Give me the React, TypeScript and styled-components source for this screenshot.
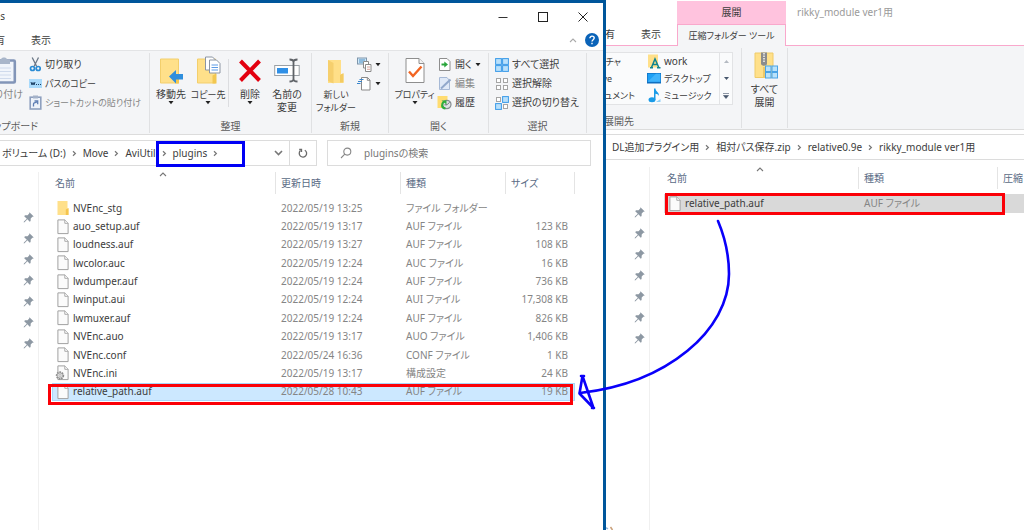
import React from "react";
import styled, { createGlobalStyle, css } from "styled-components";

const BLUE = "#00569b";
const INK = "#3c3c3c";
const MUTED = "#858585";
const HEAD = "#5a6b85";
const LINE = "#dcdcdc";
const RIBBON = "#f4f5f7";
const PINK = "#f9a8cc";

const Global = createGlobalStyle`
  * { box-sizing: border-box; }
  body {
    margin: 0;
    background: #fff;
    color: ${INK};
    font: 10px/13px "Noto Sans", "Noto Sans CJK JP", sans-serif;
    font-feature-settings: "palt";
  }
  button, input { font: inherit; color: inherit; }
  svg { display: block; flex: none; }
`;

/* ---------- window frames ---------- */

const Desktop = styled.main`
  display: flex;
  min-height: 100vh;
  overflow: hidden;
`;

const Window = styled.section<{ $share: number; $active?: boolean }>`
  flex: ${(p) => p.$share} 1 ${(p) => p.$share}px;
  min-width: 0;
  display: flex;
  flex-direction: column;
  position: relative;
  background: #fff;
  ${(p) =>
    p.$active &&
    css`
      border-top: 3px solid ${BLUE};
      border-right: 3px solid ${BLUE};
      overflow: hidden;
    `}
`;

const TitleBar = styled.header<{ $height: number }>`
  display: flex;
  align-items: center;
  height: ${(p) => p.$height}px;
`;

const TitleClip = styled.div`
  width: 5px;
  display: flex;
  justify-content: flex-end;
  overflow: hidden;
`;

const InactiveTitle = styled.span`
  padding-left: 11px;
  color: #9a9a9a;
`;

const Spacer = styled.div`
  flex: 1;
`;

const FlatButton = styled.button`
  display: flex;
  align-items: center;
  justify-content: center;
  padding: 0;
  border: 0;
  background: none;
`;

const CaptionButton = styled(FlatButton)`
  width: 40px;
  height: 27px;
`;

const TabRow = styled.nav<{ $height: number }>`
  display: flex;
  align-items: center;
  height: ${(p) => p.$height}px;
  padding-right: 2px;
`;

const Tab = styled(FlatButton)<{ $width: number; $clip?: boolean; $pad?: number }>`
  flex: none;
  width: ${(p) => p.$width}px;
  padding-left: ${(p) => p.$pad ?? 0}px;
  white-space: nowrap;
  overflow: hidden;
  ${(p) => p.$clip && "justify-content: flex-end;"}
`;

const IconButton = styled(FlatButton)`
  width: 19px;
  height: 19px;
`;

const ContextHeader = styled.div`
  width: 109px;
  height: 23px;
  margin: 1px 0 0 71px;
  display: flex;
  align-items: center;
  justify-content: center;
  background: #ffc3de;
`;

const ContextTab = styled(FlatButton)`
  position: relative;
  flex: none;
  width: 109px;
  height: 22px;
  align-self: flex-start;
  white-space: nowrap;
  font-size: 9px;
  border: 1px solid ${PINK};
  border-bottom: 0;
  background: ${RIBBON};
`;

/* ---------- ribbon ---------- */

const Ribbon = styled.div<{ $edge: string }>`
  display: flex;
  height: 85px;
  background: ${RIBBON};
  border-top: 1px solid ${(p) => p.$edge};
  border-bottom: 1px solid ${LINE};
  overflow: hidden;
`;

const Group = styled.div<{ $width: number }>`
  display: flex;
  flex-direction: column;
  flex: none;
  width: ${(p) => p.$width}px;
  margin: 2px 0 1px;
  border-right: 1px solid #e0e1e3;
`;

const GroupBody = styled.div<{ $end?: boolean; $pad?: number }>`
  flex: 1;
  display: flex;
  align-items: flex-start;
  min-width: 0;
  min-height: 0;
  padding-left: ${(p) => p.$pad ?? 0}px;
  justify-content: ${(p) => (p.$end ? "flex-end" : "flex-start")};
`;

const GroupLabel = styled.div<{ $right?: number }>`
  height: 13px;
  display: flex;
  justify-content: ${(p) => (p.$right === undefined ? "center" : "flex-end")};
  padding-right: ${(p) => p.$right ?? 0}px;
  white-space: nowrap;
  color: #5c5c5c;
`;

const Big = styled.button<{ $width: number; $muted?: boolean; $dense?: boolean }>`
  position: relative;
  flex: none;
  width: ${(p) => p.$width}px;
  display: flex;
  flex-direction: column;
  align-items: center;
  gap: 4px;
  padding: 3px 0 0;
  border: 0;
  background: none;
  font-size: ${(p) => (p.$dense ? 9 : 10)}px;
  color: ${(p) => (p.$muted ? "#858585" : INK)};
  white-space: nowrap;
`;

const BigText = styled.span`
  display: flex;
  flex-direction: column;
  align-items: center;
`;

const Divider = styled.div`
  width: 1px;
  height: 48px;
  margin: 6px 2px 0;
  background: #dcdde0;
`;

const Stack = styled.div<{ $width: number }>`
  display: flex;
  flex-direction: column;
  flex: none;
  width: ${(p) => p.$width}px;
  padding-top: 2px;
`;

const Small = styled.button<{ $muted?: boolean; $dense?: boolean }>`
  display: flex;
  align-items: center;
  gap: 3px;
  height: 19px;
  padding: 0;
  border: 0;
  background: none;
  white-space: nowrap;
  font-size: ${(p) => (p.$dense ? 9 : 10)}px;
  color: ${(p) => (p.$muted ? "#858585" : INK)};
`;

const Gallery = styled.div`
  display: flex;
  width: 127px;
  height: 53px;
  margin-top: 4px;
  background: #fafbfc;
  border: 1px solid #e2e3e5;
  border-left: 0;
  overflow: hidden;
`;

const GalleryColumn = styled.div<{ $width: number; $hidden?: number }>`
  width: ${(p) => p.$width}px;
  flex: none;
  margin-left: -${(p) => p.$hidden ?? 0}px;
  display: flex;
  flex-direction: column;
  align-items: flex-start;
`;

const GalleryItem = styled(Small)`
  height: 17px;
`;

const GalleryScroll = styled.div`
  width: 13px;
  margin-left: auto;
  display: flex;
  flex-direction: column;
  border-left: 1px solid #e2e3e5;
`;

const ScrollButton = styled(FlatButton)`
  height: 17px;
`;

/* ---------- address bar ---------- */

const AddressRow = styled.div`
  display: flex;
  gap: 10px;
  margin: 5px 12px 6px 0;
  height: 26px;
`;

const AddressBox = styled.div`
  flex: 317 1 317px;
  min-width: 0;
  display: flex;
  align-items: stretch;
  border: 1px solid ${LINE};
  border-left: 0;
`;

const WideAddress = styled.nav`
  display: flex;
  align-items: center;
  height: 26px;
  margin: 4px 0 7px;
  border: 1px solid ${LINE};
  border-width: 1px 0;
  padding-left: 6px;
  white-space: nowrap;
`;

const Crumbs = styled.nav`
  display: flex;
  align-items: center;
  flex: 1;
  padding-left: 2px;
  white-space: nowrap;
`;

const Crumb = styled.a`
  color: ${INK};
  text-decoration: none;
`;

const Gap = styled.span`
  width: 17px;
  display: flex;
  justify-content: center;
`;

const BlueMark = styled.span`
  position: relative;
  display: flex;
  align-items: center;
  padding-right: 20px;

  &::after {
    content: "";
    position: absolute;
    inset: -6px -1px -7px 0;
    border: 3px solid #0000f5;
    pointer-events: none;
  }
`;

const HistoryDrop = styled(FlatButton)`
  width: 22px;
`;

const Refresh = styled(FlatButton)`
  width: 27px;
  border-left: 1px solid ${LINE};
`;

const SearchBox = styled.label`
  flex: 264 1 264px;
  min-width: 0;
  display: flex;
  align-items: center;
  gap: 12px;
  padding-left: 12px;
  border: 1px solid ${LINE};
`;

const SearchInput = styled.input`
  flex: 1;
  min-width: 0;
  padding: 0;
  border: 0;
  outline: 0;
  background: none;
  &::placeholder {
    color: #777;
    opacity: 1;
  }
`;

/* ---------- file pane ---------- */

const Content = styled.div`
  flex: 1;
  display: flex;
  align-items: stretch;
`;

const Pins = styled.aside<{ $width: number }>`
  width: ${(p) => p.$width}px;
  flex: none;
  display: flex;
  flex-direction: column;
  align-items: flex-end;
  gap: 9px;
  padding: 39px 3px 0 0;
  border-right: 1px solid #f0f0f0;
`;

const Pane = styled.div<{ $right: number; $left: number }>`
  flex: 1;
  min-width: 0;
  padding: 0 ${(p) => p.$right}px 0 ${(p) => p.$left}px;
`;

const Files = styled.table<{ $height: number }>`
  width: 100%;
  height: ${(p) => p.$height}px;
  table-layout: fixed;
  border-collapse: collapse;
  white-space: nowrap;
`;

const Th = styled.th<{ $width?: number }>`
  position: relative;
  width: ${(p) => (p.$width ? `${p.$width}px` : "auto")};
  height: 27px;
  padding: 0;
  vertical-align: top;
  text-align: left;
  font-weight: 400;
  color: ${HEAD};
`;

const HeadCell = styled.div<{ $first?: boolean; $last?: boolean }>`
  display: flex;
  align-items: center;
  height: 22px;
  padding-left: ${(p) => (p.$first ? 3 : 5)}px;
  border-left: ${(p) => (p.$first ? 0 : 1)}px solid #e4e4e4;
  border-right: ${(p) => (p.$last ? 1 : 0)}px solid #e4e4e4;
  overflow: hidden;
`;

const SortMark = styled.span`
  position: absolute;
  top: 0;
  left: 50%;
  margin-left: -5px;
`;

const Row = styled.tr<{ $tone?: "blue" | "grey" }>`
  position: relative;
  ${(p) => p.$tone === "blue" && "background: #cce8ff; outline: 1px solid #a9d6fa; outline-offset: -1px;"}
  ${(p) => p.$tone === "grey" && "background: #d9d9d9;"}
`;

const Td = styled.td<{ $name?: boolean; $right?: boolean }>`
  padding: 0 ${(p) => (p.$right ? 7 : 0)}px 0 ${(p) => (p.$name ? 5 : 6)}px;
  text-align: ${(p) => (p.$right ? "right" : "left")};
  color: ${(p) => (p.$name ? INK : MUTED)};
`;

const NameCell = styled.div`
  display: flex;
  align-items: center;
  gap: 4px;
`;

const RedMark = styled.span<{ $inset: string }>`
  position: absolute;
  inset: ${(p) => p.$inset};
  border: 3px solid #fb0007;
  pointer-events: none;
`;

const ArrowLayer = styled.svg`
  position: absolute;
  left: -34px;
  top: 210px;
  pointer-events: none;
`;

const ResizeHint = styled.svg`
  position: absolute;
  left: 0;
  bottom: 0;
`;

/* ---------- icons ---------- */

const Chevron = ({ color = "#777" }: { color?: string }) => (
  <svg width="5" height="7" viewBox="0 0 5 7" fill="none" stroke={color} strokeWidth="1.2">
    <path d="M1 1.200l2.400 2.300L1 5.800" />
  </svg>
);

const CaretUp = ({ color = "#777" }: { color?: string }) => (
  <svg width="8" height="5" viewBox="0 0 8 5" fill="none" stroke={color} strokeWidth="1.1">
    <path d="M1 4l3-3 3 3" />
  </svg>
);

const DropArrow = () => (
  <svg width="6" height="4" viewBox="0 0 6 4">
    <path d="M0.5 0h5L3 3.2z" fill="#222" />
  </svg>
);

const DropSlot = styled.span`
  position: absolute;
  top: 48px;
  left: 50%;
  margin-left: -3px;
`;

const Sheet = () => (
  <svg width="12" height="16" viewBox="0 0 12 16">
    <path d="M0.9 0.9h7l3.2 3.2v10.500H0.9z" fill="#fbfbfb" stroke="#a2a2a2" />
    <path d="M7.8 0.9v3.4h3.3" fill="#fff" stroke="#a2a2a2" strokeWidth="0.9" />
  </svg>
);

const IniSheet = () => (
  <svg width="12" height="16" viewBox="0 0 12 16" overflow="visible">
    <path d="M0.9 0.9h7l3.2 3.2v10.500H0.9z" fill="#fbfbfb" stroke="#a2a2a2" />
    <path d="M7.8 0.9v3.4h3.3" fill="#fff" stroke="#a2a2a2" strokeWidth="0.9" />
    <circle cx="3" cy="10.5" r="3.4" fill="#e6e6e6" stroke="#8c8c8c" strokeWidth="1.6" strokeDasharray="1.6 0.9" />
    <circle cx="3" cy="10.5" r="2.6" fill="#ededed" stroke="#969696" strokeWidth="0.8" />
    <circle cx="3" cy="10.5" r="1" fill="#fff" stroke="#8c8c8c" strokeWidth="0.6" />
  </svg>
);

const FolderSmall = () => (
  <svg width="12" height="16" viewBox="0 0 12 16">
    <path d="M0.5 1h10v7.5h1V15h-11z" fill="#ffe08a" />
    <path d="M8.8 9.5l2.7-1.5v7H8.8z" fill="#f5c54f" />
  </svg>
);

const Pin = () => (
  <svg width="12" height="12" viewBox="0 0 12 12">
    <path d="M6.4 1.200l4.400 4.200-1.400.4-1.700 1.700-.1 2.500-.9.700L4.400 8.300 1.500 11.200l-.8.2.2-.8L3.800 7.700 1.200 5.200l.8-.9 2.600-.1L6.200 2.500z" fill="#8d98a3" />
  </svg>
);

const ClipboardIcon = () => (
  <svg width="26" height="28" viewBox="0 0 26 28">
    <rect x="1.8" y="4.5" width="22" height="22" rx="1" fill="#f1f5fb" stroke="#8295b8" strokeWidth="2.6" />
    <path d="M7 3.5h3c.4-2.6 5.600-2.600 6 0h3v4.500H7z" fill="#a9b6ca" />
    <path d="M6 12h14M6 15.500h14M6 19h14M6 22.500h14" stroke="#cfdaec" />
  </svg>
);

const ScissorsIcon = () => (
  <svg width="13" height="15" viewBox="0 0 13 15" fill="none">
    <path d="M3.200 0.500l4.500 9M9.500 0.500L5 9.500" stroke="#6b7786" strokeWidth="1.300" />
    <circle cx="3.500" cy="11.500" r="2" stroke="#2a8bd4" strokeWidth="1.700" />
    <circle cx="9.200" cy="11.500" r="2" stroke="#2a8bd4" strokeWidth="1.700" />
  </svg>
);

const PathIcon = () => (
  <svg width="13" height="9" viewBox="0 0 13 9">
    <rect width="13" height="9" fill="#a9dafb" />
    <path d="M2 3l1 3 1-2.500L5 6l1-3" stroke="#1c3f63" fill="none" />
    <path d="M7 5.500h1M9 5.500h1M11 5.500h1" stroke="#1c3f63" />
  </svg>
);

const ShortcutIcon = () => (
  <svg width="13" height="15" viewBox="0 0 13 15">
    <rect x="1.200" y="2.200" width="10.600" height="11.800" fill="#eef3fa" stroke="#8ea0bf" strokeWidth="1.600" />
    <rect x="4" y="0.500" width="5" height="3" fill="#a4b2c8" />
    <path d="M4.500 11.500V9c0-1 1-1.700 3.300-1.700M5.500 6h3.200v3.200" stroke="#5f7fb4" strokeWidth="1.300" fill="none" />
  </svg>
);

const MoveIcon = () => (
  <svg width="26" height="28" viewBox="0 0 26 28">
    <path d="M2.500 3h18v24h-18z" fill="#ffe08a" stroke="#f3cf6c" />
    <path d="M17.500 19.500l3.500-2v10h-3.500z" fill="#f2c751" />
    <path d="M11 20.500l7-6.500v4h7v5.500h-7v4z" fill="#2f8fdd" />
  </svg>
);

const CopyIcon = () => (
  <svg width="26" height="28" viewBox="0 0 26 28">
    <path d="M2.500 3h18v24h-18z" fill="#ffe08a" stroke="#f3cf6c" />
    <path d="M17.500 19.500l4-2v10h-4z" fill="#f2c751" />
    <path d="M10.500 1h7l3 3v10h-10z" fill="#fff" stroke="#8c95a3" />
    <path d="M14.500 4h7l3.500 3.500V17H14.500z" fill="#fff" stroke="#8c95a3" />
    <path d="M16.500 9h6.500M16.500 11.500h6.500M16.500 14h6.500" stroke="#5c9be6" />
  </svg>
);

const DeleteIcon = () => (
  <svg width="24" height="28" viewBox="0 0 24 28">
    <path d="M2.500 5L21.500 24.500M21.500 5L2.500 24.500" stroke="#e3000f" strokeWidth="4" />
  </svg>
);

const RenameIcon = () => (
  <svg width="26" height="28" viewBox="0 0 26 28" fill="none">
    <rect x="0.700" y="9.500" width="24.500" height="10" fill="#fff" stroke="#9aa0a6" />
    <rect x="3" y="12" width="11" height="5.500" fill="#2f8fe6" />
    <path d="M15.500 3.500c2.500 0 4 .5 4 2.500v17c0 2-1.500 2.500-4 2.500M23.500 3.500c-2.500 0-4 .5-4 2.500M23.500 25.500c-2.500 0-4-.5-4-2.500" stroke="#5f6368" strokeWidth="1.800" />
  </svg>
);

const NewFolderIcon = () => (
  <svg width="20" height="28" viewBox="0 0 20 28">
    <path d="M2 4h13v14h2.500v9H2z" fill="#ffdf88" />
    <path d="M2 4l5.500 3v20.500L2 25z" fill="#f6cf6d" />
    <path d="M14 19l3.500-2v9.500H14z" fill="#f3cb62" />
  </svg>
);

const NewItemIcon = () => (
  <svg width="15" height="15" viewBox="0 0 15 15">
    <rect x="0.500" y="1" width="9" height="6" fill="#cfe9fb" stroke="#7f96ab" />
    <path d="M2 3h6M2 5h4" stroke="#4e8dbf" />
    <path d="M6.500 4.500h5V11h-5z" fill="#fff" stroke="#8a8a8a" />
    <path d="M8.500 7.500h5.500v7H8.500z" fill="#fff" stroke="#8a8a8a" />
    <path d="M10 10h3M10 12.300h3" stroke="#d9a29a" />
  </svg>
);

const EasyAccessIcon = () => (
  <svg width="15" height="15" viewBox="0 0 15 15">
    <path d="M4.500 1.500h6l2.500 2.500v10H4.500z" fill="#fff" stroke="#8a8a8a" />
    <path d="M10.300 1.500v2.800H13" fill="none" stroke="#8a8a8a" />
    <path d="M2.500 3.500h4M1 5.500h4M0 7.500h3.500" stroke="#3a86cc" strokeWidth="1.200" />
  </svg>
);

const PropertiesIcon = () => (
  <svg width="22" height="28" viewBox="0 0 22 28">
    <path d="M2 2.500h13l5 5V26.500H2z" fill="#fff" stroke="#8e8e8e" />
    <path d="M15 2.500v5h5" fill="#f3f3f3" stroke="#8e8e8e" />
    <path d="M5 15.500l4 4.500 8.500-9.500" fill="none" stroke="#f26522" strokeWidth="2.400" />
  </svg>
);

const OpenIcon = () => (
  <svg width="14" height="15" viewBox="0 0 14 15">
    <path d="M1.500 1.500h7.500l3 3v9H1.500z" fill="#fff" stroke="#8e8e8e" />
    <path d="M3.500 7.500h4" stroke="#28a53a" strokeWidth="2" />
    <path d="M6.300 4.500L10 7.500l-3.700 3z" fill="#28a53a" />
  </svg>
);

const EditIcon = () => (
  <svg width="14" height="15" viewBox="0 0 14 15">
    <path d="M1.500 1.500h7.500l2.500 3v9h-10z" fill="#dfe9f7" stroke="#a6b9d6" />
    <path d="M3 12.500L12.500 3.500" stroke="#91a8cb" strokeWidth="2" />
  </svg>
);

const HistoryIcon = () => (
  <svg width="14" height="15" viewBox="0 0 14 15" overflow="visible">
    <path d="M-0.500 1h10v12h-10z" fill="#ffdc71" />
    <circle cx="8.800" cy="9.500" r="4.200" fill="#dfe2e4" stroke="#858b8f" strokeWidth="1.200" />
    <path d="M9 9.800l2.500-2.500M9 9.800H6.500" stroke="#6a6f73" />
    <path d="M7.500 13.500C3.500 13 3 9 6 6.500" fill="none" stroke="#2fae3c" strokeWidth="2.200" />
    <path d="M3.500 5.500h5v4z" fill="#2fae3c" />
  </svg>
);

const Tiles = ({ on }: { on: number[] }) => (
  <svg width="14" height="14" viewBox="0 0 14 14">
    {[0, 1, 2, 3].map((i) => {
      const big = on.includes(i);
      const x = (i % 2) * 7;
      const y = Math.floor(i / 2) * 7;
      return (
        <rect
          key={i}
          x={x + (big ? 0.6 : 1.5)}
          y={y + (big ? 0.6 : 1.5)}
          width={big ? 5.8 : 4}
          height={big ? 5.8 : 4}
          fill={big ? "#b9e0fb" : "#fff"}
          stroke={big ? "#3a9ae8" : "#a5a5a5"}
        />
      );
    })}
  </svg>
);

const RefreshIcon = () => (
  <svg width="10" height="11" viewBox="0 0 10 11" fill="none" stroke="#6a6a6a" strokeWidth="1.300">
    <path d="M6.800 2.200A3.700 3.700 0 1 1 2.500 2.600" />
    <path d="M1.200 1.500h2.300v2.600" />
  </svg>
);

const SearchIcon = () => (
  <svg width="12" height="12" viewBox="0 0 12 12" fill="none" stroke="#888" strokeWidth="1.100">
    <circle cx="7.300" cy="4.600" r="3.500" />
    <path d="M4.800 7.100L1 11" />
  </svg>
);

const WorkIcon = () => (
  <svg width="14" height="15" viewBox="0 0 14 15">
    <path d="M1 0.500h10v13H1z" fill="#ffe08a" />
    <path d="M4.500 13.500L8 5l3.800 8.500M5.800 10.500h4.800M3 13.700h3M10 13.700h3.500" fill="none" stroke="#10848f" strokeWidth="1.500" />
  </svg>
);

const DesktopIcon = () => (
  <svg width="14" height="11" viewBox="0 0 14 11">
    <rect width="14" height="10.500" fill="#0f6fc0" />
    <rect x="0.700" y="0.700" width="12.600" height="8" fill="#1ea0f5" />
    <path d="M0.700 8.700L9 0.700h4.300v8z" fill="#3fb3fb" />
  </svg>
);

const MusicIcon = () => (
  <svg width="14" height="15" viewBox="0 0 14 15">
    <ellipse cx="5" cy="11.700" rx="3.500" ry="2.500" fill="#199be8" />
    <path d="M7 0.500h1.500c0 3 4 3.500 3.300 7.500-.6-1.700-1.800-2.200-3.300-2.300v6H7z" fill="#199be8" />
    <path d="M9 14h4.500v-3z" fill="#8fd0f7" />
  </svg>
);

const ZipIcon = () => (
  <svg width="26" height="28" viewBox="0 0 26 28">
    <path d="M3 2h18v24.500H3z" fill="#ffe08a" stroke="#f0cb68" />
    <path d="M9 1.500h6v11c0 3-6 3-6 0z" fill="#8c8c8c" />
    <path d="M12 2v9" stroke="#eee" strokeWidth="1.600" strokeDasharray="1.500 1" />
    <path d="M12 16v10" stroke="#d9b04d" />
    {[13.5, 20].map((x, c) =>
      [15, 21.5].map((y, r) => (
        <rect key={`${c}${r}`} x={x} y={y} width="5.500" height="5.500" fill="#b9e2fb" stroke="#4aa3e6" />
      ))
    )}
  </svg>
);

/* ---------- data ---------- */

const files = [
  ["NVEnc_stg", "2022/05/19 13:25", "ファイル フォルダー", ""],
  ["auo_setup.auf", "2022/05/19 13:17", "AUF ファイル", "123 KB"],
  ["loudness.auf", "2022/05/19 13:27", "AUF ファイル", "108 KB"],
  ["lwcolor.auc", "2022/05/19 12:24", "AUC ファイル", "16 KB"],
  ["lwdumper.auf", "2022/05/19 12:24", "AUF ファイル", "736 KB"],
  ["lwinput.aui", "2022/05/19 12:24", "AUI ファイル", "17,308 KB"],
  ["lwmuxer.auf", "2022/05/19 12:24", "AUF ファイル", "826 KB"],
  ["NVEnc.auo", "2022/05/19 13:17", "AUO ファイル", "1,406 KB"],
  ["NVEnc.conf", "2022/05/24 16:36", "CONF ファイル", "1 KB"],
  ["NVEnc.ini", "2022/05/19 13:17", "構成設定", "24 KB"],
  ["relative_path.auf", "2022/05/28 10:43", "AUF ファイル", "19 KB"],
];

const fileIcon = (name: string) =>
  name === "NVEnc_stg" ? <FolderSmall /> : name.endsWith(".ini") ? <IniSheet /> : <Sheet />;

const PinColumn = ({ width }: { width: number }) => (
  <Pins $width={width} aria-label="クイック アクセス">
    {Array.from({ length: 7 }, (_, i) => (
      <Pin key={i} />
    ))}
  </Pins>
);

interface BigProps {
  icon: React.ReactNode;
  width: number;
  lines: string[];
  drop?: boolean;
  muted?: boolean;
  dense?: boolean;
}

const BigButton = ({ icon, width, lines, drop, muted, dense }: BigProps) => (
  <Big $width={width} $muted={muted} $dense={dense}>
    {icon}
    <BigText>
      {lines.map((l) => (
        <span key={l}>{l}</span>
      ))}
    </BigText>
    {drop && (
      <DropSlot>
        <DropArrow />
      </DropSlot>
    )}
  </Big>
);

const PluginsWindow = () => (
  <Window $share={606} $active>
    <TitleBar $height={27}>
      <TitleClip>plugins</TitleClip>
      <Spacer />
      <CaptionButton aria-label="最小化">
        <svg width="10" height="10" viewBox="0 0 10 10">
          <path d="M0.500 5.500h9" stroke="#333" />
        </svg>
      </CaptionButton>
      <CaptionButton aria-label="最大化">
        <svg width="10" height="10" viewBox="0 0 10 10">
          <rect x="0.500" y="0.500" width="9" height="9" fill="none" stroke="#222" />
        </svg>
      </CaptionButton>
      <CaptionButton aria-label="閉じる">
        <svg width="10" height="10" viewBox="0 0 10 10">
          <path d="M0.500 0.500l9 9M9.500 0.500l-9 9" stroke="#222" />
        </svg>
      </CaptionButton>
    </TitleBar>
    <TabRow $height={20}>
      <Tab $width={5} $clip>
        共有
      </Tab>
      <Tab $width={72}>表示</Tab>
      <Spacer />
      <IconButton aria-label="リボンの最小化">
        <CaretUp color="#aaa" />
      </IconButton>
      <IconButton aria-label="ヘルプ">
        <svg width="14" height="14" viewBox="0 0 14 14">
          <circle cx="7" cy="7" r="7" fill="#0a63b8" />
          <path d="M4.900 5.300c0-3 4.300-2.600 4.300-.2C9.200 6.700 7 6.700 7 8.500M7 9.700v1.500" fill="none" stroke="#fff" strokeWidth="1.400" />
        </svg>
      </IconButton>
    </TabRow>
    <Ribbon $edge="#e3e4e6">
      <Group $width={150}>
        <GroupBody $end>
          <BigButton icon={<ClipboardIcon />} width={50} lines={["貼り付け"]} muted />
          <Stack $width={120}>
            <Small>
              <ScissorsIcon />
              切り取り
            </Small>
            <Small $dense>
              <PathIcon />
              パスのコピー
            </Small>
            <Small $muted $dense>
              <ShortcutIcon />
              ショートカットの貼り付け
            </Small>
          </Stack>
        </GroupBody>
        <GroupLabel $right={111}>クリップボード</GroupLabel>
      </Group>
      <Group $width={162}>
        <GroupBody $pad={2}>
          <BigButton icon={<MoveIcon />} width={38} lines={["移動先"]} drop />
          <BigButton icon={<CopyIcon />} width={36} lines={["コピー先"]} drop dense />
          <Divider />
          <BigButton icon={<DeleteIcon />} width={38} lines={["削除"]} drop />
          <BigButton icon={<RenameIcon />} width={36} lines={["名前の", "変更"]} />
        </GroupBody>
        <GroupLabel>整理</GroupLabel>
      </Group>
      <Group $width={77}>
        <GroupBody $pad={3}>
          <BigButton icon={<NewFolderIcon />} width={42} lines={["新しい", "フォルダー"]} dense />
          <Stack $width={28}>
            <Small aria-label="新しいアイテム">
              <NewItemIcon />
              <DropArrow />
            </Small>
            <Small aria-label="ショートカット">
              <EasyAccessIcon />
              <DropArrow />
            </Small>
          </Stack>
        </GroupBody>
        <GroupLabel>新規</GroupLabel>
      </Group>
      <Group $width={100}>
        <GroupBody $pad={2}>
          <BigButton icon={<PropertiesIcon />} width={47} lines={["プロパティ"]} drop dense />
          <Stack $width={46}>
            <Small>
              <OpenIcon />
              開く
              <DropArrow />
            </Small>
            <Small $muted>
              <EditIcon />
              編集
            </Small>
            <Small>
              <HistoryIcon />
              履歴
            </Small>
          </Stack>
        </GroupBody>
        <GroupLabel>開く</GroupLabel>
      </Group>
      <Group $width={98}>
        <GroupBody $pad={6}>
          <Stack $width={88}>
            <Small>
              <Tiles on={[0, 1, 2, 3]} />
              すべて選択
            </Small>
            <Small>
              <Tiles on={[]} />
              選択解除
            </Small>
            <Small>
              <Tiles on={[1, 2]} />
              選択の切り替え
            </Small>
          </Stack>
        </GroupBody>
        <GroupLabel>選択</GroupLabel>
      </Group>
    </Ribbon>
    <AddressRow>
      <AddressBox>
        <Crumbs aria-label="パス">
          <Crumb href="#d">ボリューム (D:)</Crumb>
          <Gap>
            <Chevron />
          </Gap>
          <Crumb href="#move">Move</Crumb>
          <Gap>
            <Chevron />
          </Gap>
          <Crumb href="#aviutil">AviUtil</Crumb>
          <BlueMark>
            <Gap>
              <Chevron />
            </Gap>
            <Crumb href="#plugins">plugins</Crumb>
            <Gap>
              <Chevron />
            </Gap>
          </BlueMark>
        </Crumbs>
        <HistoryDrop aria-label="以前の場所">
          <svg width="9" height="6" viewBox="0 0 9 6" fill="none" stroke="#777" strokeWidth="1.600">
            <path d="M1 1l3.500 3.500L8 1" />
          </svg>
        </HistoryDrop>
        <Refresh aria-label="最新の情報に更新">
          <RefreshIcon />
        </Refresh>
      </AddressBox>
      <SearchBox>
        <SearchIcon />
        <SearchInput type="text" aria-label="pluginsの検索" placeholder="pluginsの検索" />
      </SearchBox>
    </AddressRow>
    <Content>
      <PinColumn width={39} />
      <Pane $left={13} $right={28}>
        <Files $height={229}>
          <thead>
            <tr>
              <Th>
                <HeadCell $first>名前</HeadCell>
                <SortMark>
                  <CaretUp />
                </SortMark>
              </Th>
              <Th $width={125}>
                <HeadCell>更新日時</HeadCell>
              </Th>
              <Th $width={105}>
                <HeadCell>種類</HeadCell>
              </Th>
              <Th $width={70}>
                <HeadCell $last>サイズ</HeadCell>
              </Th>
            </tr>
          </thead>
          <tbody>
            {files.map(([name, date, type, size], i) => {
              const selected = i === files.length - 1;
              return (
                <Row key={name} $tone={selected ? "blue" : undefined}>
                  <Td $name>
                    <NameCell>
                      {fileIcon(name)}
                      {name}
                    </NameCell>
                    {selected && <RedMark $inset="1px 2px -4px -4px" />}
                  </Td>
                  <Td>{date}</Td>
                  <Td>{type}</Td>
                  <Td $right>{size}</Td>
                </Row>
              );
            })}
          </tbody>
        </Files>
      </Pane>
    </Content>
  </Window>
);

const ZipWindow = () => (
  <Window $share={418}>
    <TitleBar $height={24}>
      <ContextHeader>展開</ContextHeader>
      <InactiveTitle>rikky_module ver1用</InactiveTitle>
    </TitleBar>
    <TabRow $height={21}>
      <Tab $width={9} $clip>
        共有
      </Tab>
      <Tab $width={62} $pad={10}>
        表示
      </Tab>
      <ContextTab>圧縮フォルダー ツール</ContextTab>
    </TabRow>
    <Ribbon $edge={PINK}>
      <Group $width={136}>
        <GroupBody>
          <Gallery>
            <GalleryColumn $width={58} $hidden={17}>
              <GalleryItem $dense>ピクチャ</GalleryItem>
              <GalleryItem $dense>Move</GalleryItem>
              <GalleryItem $dense>ドキュメント</GalleryItem>
            </GalleryColumn>
            <GalleryColumn $width={72}>
              <GalleryItem>
                <WorkIcon />
                work
              </GalleryItem>
              <GalleryItem $dense>
                <DesktopIcon />
                デスクトップ
              </GalleryItem>
              <GalleryItem $dense>
                <MusicIcon />
                ミュージック
              </GalleryItem>
            </GalleryColumn>
            <GalleryScroll>
              <ScrollButton aria-label="上へ">
                <svg width="5" height="3" viewBox="0 0 5 3">
                  <path d="M0 3h5L2.500 0z" fill="#b4bac2" />
                </svg>
              </ScrollButton>
              <ScrollButton aria-label="下へ">
                <svg width="5" height="3" viewBox="0 0 5 3">
                  <path d="M0 0h5L2.500 3z" fill="#46566c" />
                </svg>
              </ScrollButton>
              <ScrollButton aria-label="その他">
                <svg width="6" height="6" viewBox="0 0 6 6">
                  <path d="M0 0.500h6M0.500 2.500h5L3 5.500z" fill="#46566c" stroke="#46566c" strokeWidth="0.600" />
                </svg>
              </ScrollButton>
            </GalleryScroll>
          </Gallery>
        </GroupBody>
        <GroupLabel $right={107}>展開先</GroupLabel>
      </Group>
      <Group $width={46}>
        <GroupBody>
          <BigButton icon={<ZipIcon />} width={45} lines={["すべて", "展開"]} />
        </GroupBody>
      </Group>
    </Ribbon>
    <WideAddress aria-label="パス">
      <Crumb href="#dl">DL追加プラグイン用</Crumb>
      <Gap>
        <Chevron />
      </Gap>
      <Crumb href="#zip">相対パス保存.zip</Crumb>
      <Gap>
        <Chevron />
      </Gap>
      <Crumb href="#relative">relative0.9e</Crumb>
      <Gap>
        <Chevron />
      </Gap>
      <Crumb href="#rikky">rikky_module ver1用</Crumb>
    </WideAddress>
    <Content>
      <PinColumn width={44} />
      <Pane $left={14} $right={0}>
        <Files $height={46}>
          <thead>
            <tr>
              <Th>
                <HeadCell $first>名前</HeadCell>
                <SortMark>
                  <CaretUp />
                </SortMark>
              </Th>
              <Th $width={139}>
                <HeadCell>種類</HeadCell>
              </Th>
              <Th $width={27}>
                <HeadCell>圧縮</HeadCell>
              </Th>
            </tr>
          </thead>
          <tbody>
            <Row $tone="grey">
              <Td $name>
                <NameCell>
                  <Sheet />
                  relative_path.auf
                </NameCell>
                <RedMark $inset="-1px 19px -2px 1px" />
              </Td>
              <Td>AUF ファイル</Td>
              <Td />
            </Row>
          </tbody>
        </Files>
      </Pane>
    </Content>
    <ArrowLayer width="170" height="204" viewBox="0 0 170 204" fill="none" stroke="#0a00fa" strokeWidth="2.600" strokeLinecap="round" strokeLinejoin="round">
      <path d="M146 11C154 30 157 48 157 64C157 120 96 173 8 183" />
      <path d="M10.500 166L7.500 183.500L21.500 198zM9 166h3M20 198h2" />
    </ArrowLayer>
    <ResizeHint width="10" height="4" viewBox="0 0 10 4">
      <path d="M0 1.500l2 1.500" stroke="#8fb4dc" strokeWidth="1.500" />
      <path d="M4.500 1l2 3" stroke="#c9a07a" strokeWidth="1.500" />
    </ResizeHint>
  </Window>
);

export default function App() {
  return (
    <>
      <Global />
      <Desktop>
        <PluginsWindow />
        <ZipWindow />
      </Desktop>
    </>
  );
}
